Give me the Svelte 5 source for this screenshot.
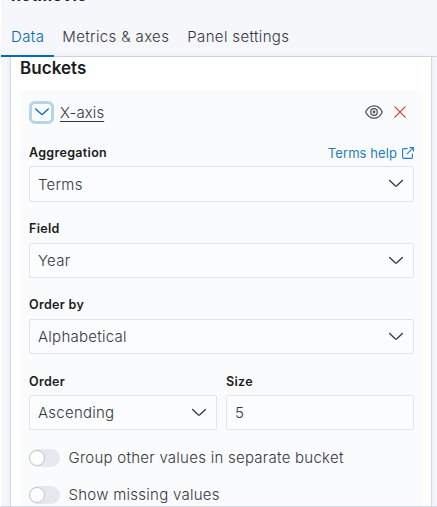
<script>
  let tab = $state('Data');
  let toggles = $state([false, false]);
  const tabs = ['Data', 'Metrics & axes', 'Panel settings'];
  const labels = ['Group other values in separate bucket', 'Show missing values'];
</script>

{#snippet chevron()}
  <svg class="chev" width="16" height="16" viewBox="0 0 16 16" fill="none" stroke="currentColor" stroke-width="1.3" stroke-linecap="round"><path d="M1.6 4.5 7.2 9.8Q8 10.5 8.8 9.8L14.4 4.5" /></svg>
{/snippet}

<div class="app">
  <header>
    <div class="title">netmovie</div>
    <nav>
      {#each tabs as t}
        <button class="tab" class:active={tab === t} onclick={() => (tab = t)}>{t}</button>
      {/each}
    </nav>
  </header>
  <main>
    <section class="panel">
      <h2>Buckets</h2>
      <div class="bucket">
        <div class="head">
          <button class="toggle" aria-label="Collapse">
            <svg width="16" height="16" viewBox="0 0 16 16" fill="none" stroke="currentColor" stroke-width="1.3" stroke-linecap="round"><path d="M1.7 5 7.2 10.1Q8 10.8 8.8 10.1L14.3 5" /></svg>
          </button>
          <span class="name">X-axis</span>
          <svg class="eye" width="18" height="14" viewBox="0 0 18 14" fill="none" stroke="#494c55" stroke-width="1.2"><path d="M.7 7C2.5 3 5.5 .8 9 .8S15.5 3 17.3 7C15.5 11 12.5 13.2 9 13.2S2.5 11 .7 7Z" /><circle cx="9" cy="7" r="3.3" /><circle cx="9" cy="7" r=".8" /></svg>
          <svg class="cross" width="12" height="12" viewBox="0 0 12 12" fill="none" stroke="#c5403b" stroke-width="1.2" stroke-linecap="round"><path d="m.8.8 10.4 10.4M11.2.8.8 11.2" /></svg>
        </div>

        <div class="label first">
          <span>Aggregation</span>
          <span class="help">Terms help
            <svg width="12" height="12" viewBox="0 0 12 12" fill="none" stroke="currentColor" stroke-width="1.1"><path d="M5.5 1.6H1.8Q.6 1.6 .6 2.8V10.2Q.6 11.4 1.8 11.4H9.2Q10.4 11.4 10.4 10.2V6.5M7.6.6H11.4V4.4M11.2.8 4.8 7.2" /></svg>
          </span>
        </div>
        <div class="field tall"><span>Terms</span>{@render chevron()}</div>

        <div class="label"><span>Field</span></div>
        <div class="field"><span>Year</span>{@render chevron()}</div>

        <div class="label"><span>Order by</span></div>
        <div class="field"><span>Alphabetical</span>{@render chevron()}</div>

        <div class="pair">
          <div>
            <div class="label low"><span>Order</span></div>
            <div class="field"><span>Ascending</span>{@render chevron()}</div>
          </div>
          <div>
            <div class="label low"><span>Size</span></div>
            <div class="field"><span>5</span></div>
          </div>
        </div>

        <div class="switches">
          {#each labels as l, i}
            <button class="switch" class:on={toggles[i]} onclick={() => (toggles[i] = !toggles[i])}>
              <i></i><span>{l}</span>
            </button>
          {/each}
        </div>
      </div>
    </section>
  </main>
</div>

<style>
  .app {
    width: 437px;
    height: 507px;
    box-sizing: border-box;
    display: flex;
    flex-direction: column;
    overflow: hidden;
    background: #f5f7fb;
    border-left: 1px solid #fff;
    border-bottom: 1px solid #d3dae6;
    font-family: Inter, 'Liberation Sans', sans-serif;
    color: #343741;
  }
  button { border: 0; padding: 0; background: none; font: inherit; color: inherit; }
  header {
    height: 57px;
    flex: none;
    box-sizing: border-box;
    border-bottom: 1px solid #d3dae6;
  }
  .title {
    height: 20px;
    margin-top: -15px;
    padding-left: 10px;
    font-size: 16px;
    font-weight: 700;
    line-height: 20px;
    letter-spacing: .4px;
    color: #1a1c21;
  }
  nav { display: flex; height: 52px; }
  .tab {
    padding: 14px 10px 1px;
    margin-right: -2px;
    box-sizing: border-box;
    height: 52px;
    border-bottom: 2px solid transparent;
    font-size: 15px;
    font-weight: 300;
    letter-spacing: .36px;
    white-space: nowrap;
  }
  .tab.active { color: #006bb4; border-bottom-color: #006bb4; }
  main { flex: 1; min-height: 0; padding: 0 5px 0 9px; }
  .panel {
    height: 449px;
    box-sizing: border-box;
    padding: 0 9px;
    background: #fff;
    border: solid #d3dae6;
    border-width: 0 1px;
    box-shadow: 0 0 5px rgba(110, 125, 175, .12);
    overflow: hidden;
  }
  h2 {
    margin: 0;
    height: 33px;
    line-height: 22px;
    font-size: 17px;
    font-weight: 600;
    letter-spacing: .05px;
    color: #1a1c21;
  }
  .bucket {
    height: 430px;
    padding: 0 8px 0 9px;
    background: #fafbfd;
    border-radius: 4px;
  }
  .head { display: flex; align-items: center; height: 45px; }
  .toggle {
    width: 25px;
    height: 23px;
    margin-bottom: 1px;
    box-sizing: border-box;
    border: 3px solid #b5d4e9;
    border-radius: 6px;
    color: #006bb4;
    display: flex;
    align-items: center;
    justify-content: center;
  }
  .toggle svg { flex: none; }
  .name { margin-left: 6px; font-size: 15px; font-weight: 300; letter-spacing: .1px; text-decoration: underline; text-underline-offset: 3px; text-decoration-thickness: 1px; }
  .eye { margin: 0 0 1px auto; }
  .cross { margin: 0 8px 1px 11px; }
  .label {
    height: 41px;
    box-sizing: border-box;
    padding-top: 18px;
    display: flex;
    justify-content: space-between;
    font-size: 12.5px;
    font-weight: 600;
    line-height: 18px;
    letter-spacing: .32px;
    color: #1a1c21;
  }
  .label.low { padding-top: 19px; }
  .label.first { height: 31px; padding-top: 9px; }
  .help { display: flex; align-items: center; height: 18px; gap: 5px; font-size: 13px; font-weight: 400; letter-spacing: .08px; color: #1f7fbd; }
  .field {
    height: 35px;
    box-sizing: border-box;
    border: 1px solid #e1e4ee;
    border-radius: 2px;
    background: #fbfcfd;
    display: flex;
    align-items: center;
    justify-content: space-between;
    padding: 0 9px 0 8px;
    font-size: 15px;
    font-weight: 300;
    letter-spacing: .25px;
    color: #343741;
  }
  .field.tall { height: 36px; }
  .chev { color: #343741; }
  .pair { display: grid; grid-template-columns: 188px 188px; gap: 9px; }
  .switches { padding-top: 19px; display: flex; flex-direction: column; gap: 19px; }
  .switch { display: flex; align-items: center; height: 18px; font-size: 15px; font-weight: 300; letter-spacing: .26px; color: #343741; white-space: nowrap; }
  .switch span { margin-top: -1px; }
  .switch i { width: 31px; height: 18px; border-radius: 9px; background: #e5e8ee; margin-right: 8.5px; display: flex; align-items: center; }
  .switch i::before { content: ''; width: 14px; height: 14px; border: 1px solid #c2c4ca; border-radius: 50%; background: #fff; }
  .switch.on i { background: #006bb4; justify-content: flex-end; }
</style>
